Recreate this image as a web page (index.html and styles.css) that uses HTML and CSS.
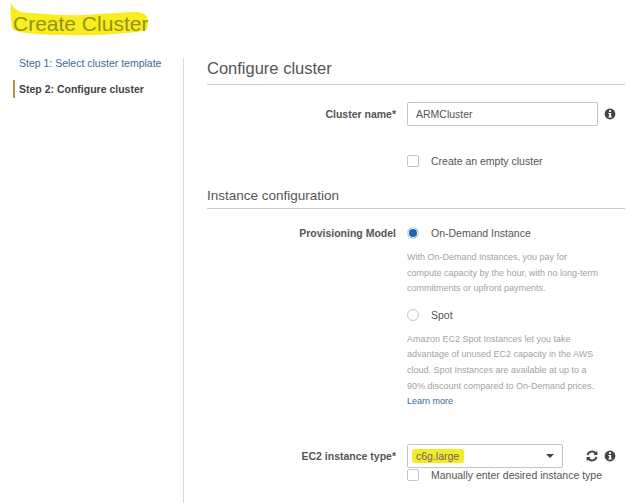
FILE: index.html
```html
<!DOCTYPE html>
<html lang="en">
<head>
<meta charset="utf-8">
<title>Create Cluster</title>
<link rel="stylesheet" href="styles.css">
</head>
<body>
<header class="page-header">
  <svg class="title-mark" width="150" height="36" viewBox="0 0 150 36"><path fill="#f9ec1f" d="M11 3 C14 10 20 13 32 13 C50 14 66 16 84 15 C104 14 124 12 138 12 C144 13 148 16 148 21 C148 26 148 29 146 30 C136 33 124 33 112 34 C96 36 78 35 62 35 C46 35 30 34 20 32 C15 31 12 29 12 27 C11 20 10 10 11 3 Z"/></svg>
  <h1 class="page-title">Create Cluster</h1>
</header>
<div class="layout">
  <nav class="steps">
    <a class="step step-link">Step 1: Select cluster template</a>
    <div class="step step-current">Step 2: Configure cluster</div>
  </nav>
  <main class="content">
    <h2 class="section-title">Configure cluster</h2>
    <div class="row row-name">
      <label class="label">Cluster name*</label>
      <div class="control control-inline">
        <div class="input">ARMCluster</div>
        <svg class="icon icon-info" width="12" height="12" viewBox="0 0 12 12"><circle cx="6" cy="6" r="5.4" fill="#444"/><rect x="5" y="2.2" width="2" height="1.8" fill="#fff"/><path fill="#fff" d="M4.3 5h2.8v3.6h.8v1H4.3v-1h.9V6h-.9z"/></svg>
      </div>
    </div>
    <div class="row row-empty">
      <span class="label"></span>
      <div class="check-line"><span class="checkbox"></span><span class="option-text">Create an empty cluster</span></div>
    </div>
    <h3 class="sub-title">Instance configuration</h3>
    <div class="row row-model">
      <label class="label">Provisioning Model</label>
      <div class="control">
        <div class="check-line"><span class="radio radio-on"></span><span class="option-text">On-Demand Instance</span></div>
        <p class="help help-ondemand">With On-Demand Instances, you pay for<br>compute capacity by the hour, with no long-term<br>commitments or upfront payments.</p>
        <div class="check-line check-spot"><span class="radio"></span><span class="option-text">Spot</span></div>
        <p class="help help-spot">Amazon EC2 Spot Instances let you take<br>advantage of unused EC2 capacity in the AWS<br>cloud. Spot Instances are available at up to a<br>90% discount compared to On-Demand prices.<br><a class="learn">Learn more</a></p>
      </div>
    </div>
    <div class="row row-type">
      <label class="label">EC2 instance type*</label>
      <div class="control">
        <div class="control-inline">
          <div class="select">
            <span class="select-value">c6g.large</span>
            <span class="caret"></span>
          </div>
          <svg class="icon icon-refresh" width="12" height="12" viewBox="0 0 12 12"><path fill="none" stroke="#444" stroke-width="1.9" d="M1.6 5A4.5 4.5 0 0 1 9.6 3.4M10.4 7A4.5 4.5 0 0 1 2.4 8.6"/><path fill="#444" d="M11.4.8v4.1H7.3zM.6 11.2V7.1h4.1z"/></svg>
          <svg class="icon icon-info icon-info-type" width="12" height="12" viewBox="0 0 12 12"><circle cx="6" cy="6" r="5.4" fill="#444"/><rect x="5" y="2.2" width="2" height="1.8" fill="#fff"/><path fill="#fff" d="M4.3 5h2.8v3.6h.8v1H4.3v-1h.9V6h-.9z"/></svg>
        </div>
        <div class="check-line check-manual"><span class="checkbox"></span><span class="option-text">Manually enter desired instance type</span></div>
      </div>
    </div>
  </main>
</div>
</body>
</html>
```
FILE: styles.css
```css
* { box-sizing: border-box; }
html, body { margin: 0; padding: 0; }
body {
  width: 626px;
  height: 503px;
  overflow: hidden;
  background: #fff;
  font-family: "Liberation Sans", Arial, sans-serif;
  font-size: 10.5px;
  color: #555;
}
.page-header { position: relative; height: 58px; padding: 11px 0 0 13px; }
.title-mark { position: absolute; left: 0; top: 0; }
.page-title {
  position: relative;
  margin: 0;
  font-size: 21px;
  line-height: 26px;
  font-weight: 400;
  color: #939312;
}
.layout { display: flex; height: 445px; }
.steps { width: 184px; flex: none; border-right: 1px solid #ddd; padding-left: 13px; }
.step { display: block; line-height: 14px; }
.step-link { color: #3a6c98; padding-left: 6px; margin-top: -2px; }
.step-current {
  margin-top: 10px;
  padding: 2px 0 2px 4px;
  border-left: 2px solid #c08a45;
  font-weight: 700;
  color: #444;
}
.content { flex: 1; padding: 0 1px 0 23px; }
.section-title {
  margin: 0;
  height: 27px;
  font-size: 16.5px;
  line-height: 21px;
  font-weight: 400;
  color: #555;
  border-bottom: 1px solid #ccc;
}
.row { display: flex; gap: 11px; }
.label {
  width: 189px;
  flex: none;
  text-align: right;
  font-weight: 700;
  color: #555;
  line-height: 14px;
}
.row-name { margin-top: 17px; height: 24px; }
.row-name .label { padding-top: 5px; }
.control-inline { display: flex; align-items: center; }
.input {
  width: 191px;
  height: 24px;
  border: 1px solid #c4c4c4;
  border-radius: 2px;
  padding-left: 8px;
  line-height: 22px;
  color: #555;
}
.icon { display: block; flex: none; }
.row-name .icon-info { margin-left: 6px; }
.row-empty { margin-top: 28px; }
.check-line { display: flex; align-items: center; height: 14px; }
.checkbox {
  width: 12px;
  height: 12px;
  flex: none;
  border: 1px solid #c4c4c4;
  border-radius: 2px;
  background: #fff;
}
.option-text { margin-left: 12px; line-height: 14px; color: #555; }
.sub-title {
  margin: 19px 0 0;
  height: 22px;
  font-size: 13.5px;
  line-height: 17px;
  font-weight: 400;
  color: #555;
  border-bottom: 1px solid #ccc;
}
.row-model { margin-top: 17px; }
.radio {
  width: 12px;
  height: 12px;
  flex: none;
  border: 1px solid #c4c4c4;
  border-radius: 50%;
  background: #fff;
}
.radio-on { border-color: #cfe0ef; background: #1f62ad; box-shadow: inset 0 0 0 1px #fff; }
.help {
  margin: 0;
  font-size: 9px;
  line-height: 15.6px;
  color: #a3a3a3;
}
.help-ondemand { margin-top: 10px; }
.check-spot { margin-top: 11px; }
.help-spot { margin-top: 10px; }
.learn { color: #3a6c98; }
.row-type { margin-top: 34px; }
.row-type .label { padding-top: 5px; }
.select {
  position: relative;
  width: 156px;
  height: 24px;
  border: 1px solid #c4c4c4;
  border-radius: 2px;
  padding-left: 8px;
  line-height: 22px;
}
.select-value {
  margin-left: -4px;
  padding: 1px 5px 1px 4px;
  border-radius: 3px;
  background: #f5ea2a;
  color: #666;
}
.caret {
  position: absolute;
  right: 8px;
  top: 9px;
  border-left: 4px solid transparent;
  border-right: 4px solid transparent;
  border-top: 4px solid #444;
}
.icon-refresh { margin-left: 23px; }
.icon-info-type { margin-left: 6px; }
.check-manual { margin-top: 0; }
```
